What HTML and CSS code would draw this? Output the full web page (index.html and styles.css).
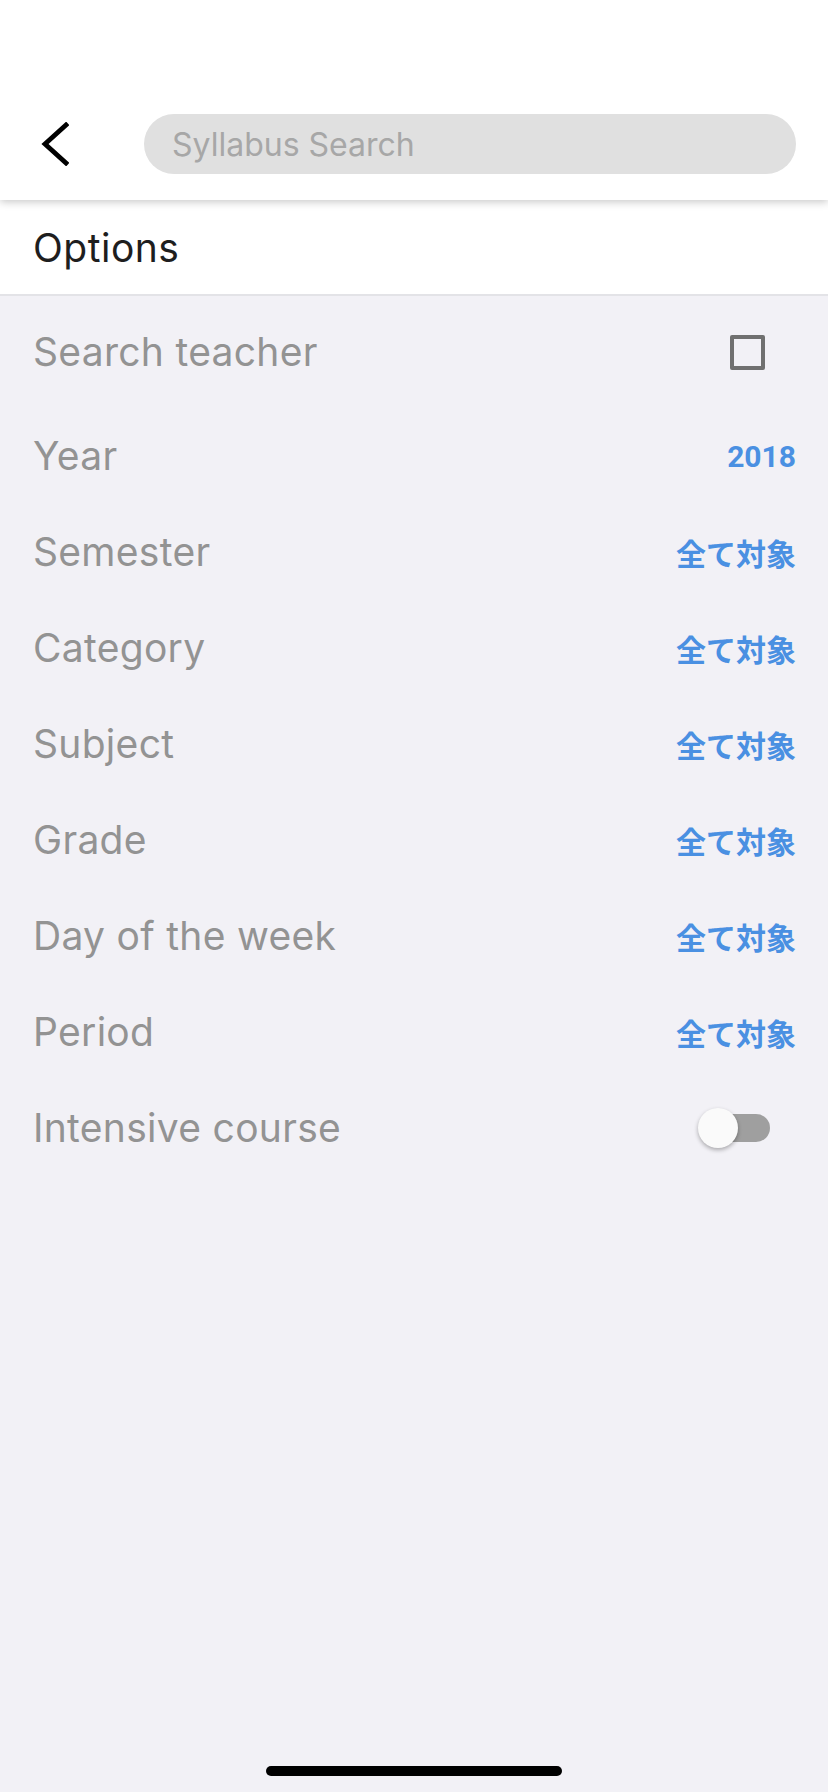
FILE: index.html
```html
<!DOCTYPE html>
<html lang="en">
<head>
<meta charset="utf-8">
<title>Syllabus Search</title>
<link rel="stylesheet" href="styles.css">
</head>
<body>
<div class="screen">
  <header class="appbar">
    <div class="appbar-row">
      <button class="back" aria-label="Back">
        <svg width="28" height="44" viewBox="0 0 28 44"><path d="M25 3 L4 22 L25 41" fill="none" stroke="#000" stroke-width="4.8" stroke-linecap="square" stroke-linejoin="miter"/></svg>
      </button>
      <div class="search"><span class="placeholder">Syllabus Search</span></div>
    </div>
  </header>
  <section class="options-head"><h2>Options</h2></section>
  <main class="list">
    <div class="row row-first">
      <span class="label">Search teacher</span>
      <span class="checkbox"></span>
    </div>
    <div class="row"><span class="label">Year</span><span class="value">2018</span></div>
    <div class="row"><span class="label">Semester</span><span class="value">全て対象</span></div>
    <div class="row"><span class="label">Category</span><span class="value">全て対象</span></div>
    <div class="row"><span class="label">Subject</span><span class="value">全て対象</span></div>
    <div class="row"><span class="label">Grade</span><span class="value">全て対象</span></div>
    <div class="row"><span class="label">Day of the week</span><span class="value">全て対象</span></div>
    <div class="row"><span class="label">Period</span><span class="value">全て対象</span></div>
    <div class="row">
      <span class="label">Intensive course</span>
      <span class="switch"><span class="track"></span><span class="thumb"></span></span>
    </div>
  </main>
  <div class="home-indicator"></div>
</div>
</body>
</html>
```
FILE: styles.css
```css
* { box-sizing: border-box; }
html, body { margin: 0; padding: 0; }
body {
  background: #f2f1f6;
  font-family: Inter, Roboto, "Noto Sans CJK JP", sans-serif;
}
.screen {
  position: relative;
  width: 828px;
  height: 1792px;
  background: #f2f1f6;
  overflow: hidden;
}
.appbar {
  position: relative;
  z-index: 2;
  height: 200px;
  background: #fff;
  padding-top: 114px;
  box-shadow: 0 2px 8px rgba(0,0,0,0.22);
}
.appbar-row {
  display: flex;
  align-items: center;
  height: 60px;
  padding: 0 32px 0 41px;
}
.back {
  border: 0;
  background: none;
  padding: 0;
  width: 103px;
  height: 44px;
  display: flex;
  align-items: center;
  justify-content: flex-start;
  flex: none;
}
.back svg { display: block; }
.search {
  flex: 1;
  height: 60px;
  border-radius: 30px;
  background: #e0e0e0;
  display: flex;
  align-items: center;
  padding-left: 28px;
}
.placeholder {
  font-size: 32px;
  color: #a7a7a7;
}
.options-head {
  position: relative;
  z-index: 1;
  background: #fff;
  height: 96px;
  border-bottom: 2px solid #e3e3e7;
  display: flex;
  align-items: center;
  padding: 0 33px;
}
.options-head h2 {
  margin: 0;
  font-weight: 400;
  font-size: 39px;
  letter-spacing: 0.5px;
  color: #1e1e1e;
}
.list {
  display: flex;
  flex-direction: column;
}
.row {
  height: 96px;
  display: flex;
  align-items: center;
  justify-content: space-between;
  padding: 0 32px 0 33px;
}
.row-first { height: 112px; }
.label {
  font-size: 39px;
  letter-spacing: 0.3px;
  color: #939393;
  margin-top: -2px;
}
.value {
  font-size: 30px;
  font-weight: 700;
  color: #4a90e2;
  font-family: Roboto, "Noto Sans CJK JP", sans-serif;
}
.checkbox {
  width: 35px;
  height: 35px;
  border: 4px solid #707070;
  border-radius: 2px;
  margin-right: 31px;
}
.switch {
  position: relative;
  width: 72px;
  height: 40px;
  margin-right: 26px;
}
.track {
  position: absolute;
  right: 0;
  top: 6px;
  width: 66px;
  height: 28px;
  border-radius: 14px;
  background: #9f9f9f;
}
.thumb {
  position: absolute;
  left: 0;
  top: 0;
  width: 40px;
  height: 40px;
  border-radius: 50%;
  background: #fafafa;
  box-shadow: 0 2px 4px rgba(0,0,0,0.3);
}
.home-indicator {
  position: absolute;
  left: 266px;
  top: 1766px;
  width: 296px;
  height: 10px;
  border-radius: 5px;
  background: #000;
}
```
